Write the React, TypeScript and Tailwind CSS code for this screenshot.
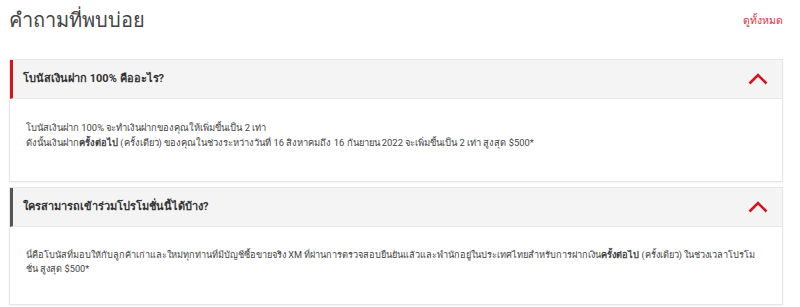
const faqs = [
  {
    q: "โบนัสเงินฝาก 100% คืออะไร?",
    accent: "border-l-[#d7141e]",
    pad: "pt-[22px] pb-[31px] text-[9.4px]",
    body: (
      <div className="flex flex-col gap-[1px]">
        <p>โบนัสเงินฝาก 100% จะทำเงินฝากของคุณให้เพิ่มขึ้นเป็น 2 เท่า</p>
        <p>
          ดังนั้นเงินฝาก<b>ครั้งต่อไป</b> (ครั้งเดียว) ของคุณในช่วงระหว่างวันที่ 16 สิงหาคมถึง 16 กันยายน 2022
          จะเพิ่มขึ้นเป็น 2 เท่า สูงสุด $500*
        </p>
      </div>
    ),
  },
  {
    q: "ใครสามารถเข้าร่วมโปรโมชั่นนี้ได้บ้าง?",
    accent: "border-l-[#555555]",
    pad: "pt-[21px] pb-[28px] text-[9.2px]",
    body: (
      <p>
        นี่คือโบนัสที่มอบให้กับลูกค้าเก่าและใหม่ทุกท่านที่มีบัญชีซื้อขายจริง XM ที่ผ่านการตรวจสอบยืนยันแล้วและพำนักอยู่ในประเทศไทยสำหรับการฝากเงิน
        <b>ครั้งต่อไป</b> (ครั้งเดียว) ในช่วงเวลาโปรโม
        <br />
        ชั่น สูงสุด $500*
      </p>
    ),
  },
];

function Chevron() {
  return (
    <svg width="20" height="12" viewBox="0 0 20 12" fill="none">
      <path d="M1.5 10.5 L10 2 L18.5 10.5" stroke="#d7141e" strokeWidth="2.6" />
    </svg>
  );
}

export default function App() {
  return (
    <div className="w-[800px] h-[307px] bg-white px-[9px] font-['Roboto','Noto_Sans',sans-serif] text-[#333]">
      <div className="flex items-start justify-between pt-[5px] pr-[8px]">
        <h2 className="text-[20px] leading-[30px] text-[#444]">คำถามที่พบบ่อย</h2>
        <a className="text-[10.5px] leading-[20px] mt-[6px] text-[#e0323c]">ดูทั้งหมด</a>
      </div>

      <div className="mt-[24px] w-[774px] flex flex-col gap-[5px]">
        {faqs.map((f) => (
          <div key={f.q} className="border border-[#e6e6e6] shadow-[0_1px_2px_rgba(0,0,0,0.05)]">
            <div
              className={`h-[39px] flex items-center justify-between bg-[#f4f4f4] border-l-[3px] border-b border-b-[#e8e8e8] pl-[10px] pr-[14px] ${f.accent}`}
            >
              <span className="text-[11px] font-bold text-[#333]">{f.q}</span>
              <Chevron />
            </div>
            <div className={`px-[16px] leading-[14px] text-[#444] ${f.pad}`}>{f.body}</div>
          </div>
        ))}
      </div>
    </div>
  );
}
